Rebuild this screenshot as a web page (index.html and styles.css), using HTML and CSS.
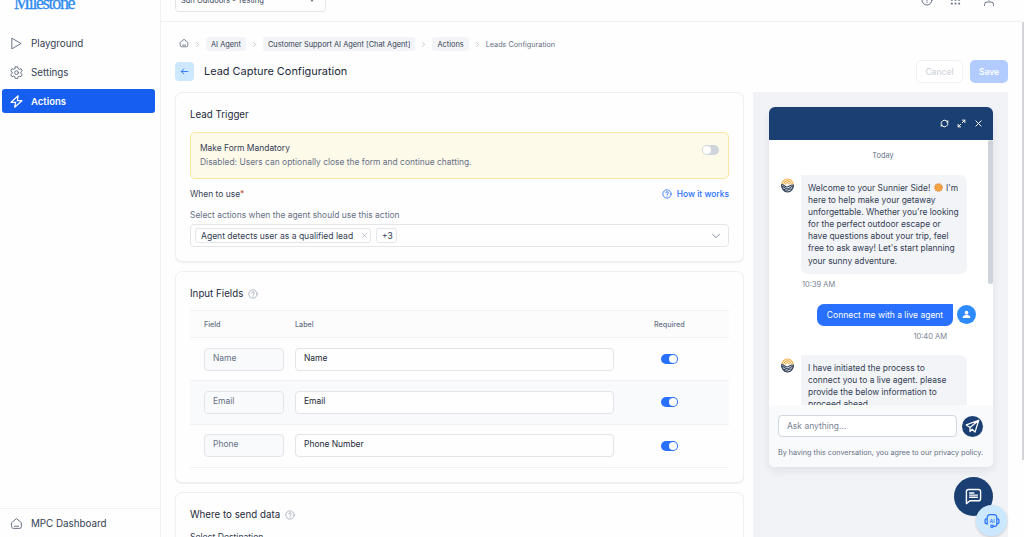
FILE: index.html
```html
<!DOCTYPE html>
<html lang="en">
<head>
    <meta charset="UTF-8">
    <meta name="viewport" content="width=device-width, initial-scale=1.0">
    <title>Lead Capture Configuration</title>
    <link rel="stylesheet" href="styles.css">
</head>
<body>

    <!-- shared icons -->
    <svg class="sprite" width="0" height="0">
        <symbol id="i-home" viewBox="0 0 24 24"><path d="M3 10.5 12 3l9 7.5V18a3 3 0 0 1-3 3H6a3 3 0 0 1-3-3z M8 17h8"/></symbol>
        <symbol id="i-help" viewBox="0 0 24 24"><circle cx="12" cy="12" r="10"/><path d="M9 9.2a3 3 0 0 1 6 .6c0 2-3 2.4-3 4.2 M12 17v.6"/></symbol>
        <symbol id="i-right" viewBox="0 0 24 24"><path d="m9 5 7 7-7 7"/></symbol>
        <symbol id="i-down" viewBox="0 0 24 24"><path d="m4 8 8 8 8-8"/></symbol>
        <symbol id="i-x" viewBox="0 0 24 24"><path d="m5 5 14 14M19 5 5 19"/></symbol>
        <symbol id="i-bot" viewBox="0 0 28 32">
            <g stroke="#f3a93c" stroke-width="2.4"><path d="M2 14a12 12 0 0 1 24 0 M6 14a8 8 0 0 1 16 0 M10 14a4 4 0 0 1 8 0"/></g>
            <g stroke="#35435a" stroke-width="2.4"><path d="M1 14c5-1 8 7 13 5s7-5 13-4 M1 18c5-1 8 6 13 5s7-5 13-5 M3 23c4 0 7 5 11 3s6-3 11-3 M6 27c5 3 11 4 16 0 M1 14c0 8 5 16 13 16s13-8 13-16"/></g>
        </symbol>
    </svg>

    <aside class="sidebar">
        <div class="logo"><span>Milestone</span></div>
        <nav class="menu">
            <a class="menu-item">
                <svg class="icon" viewBox="0 0 24 24"><path d="M4 2.5 20.500 12 4 21.500z"/></svg>
                Playground
            </a>
            <a class="menu-item">
                <svg class="icon" viewBox="0 0 24 24"><path d="M9.800 1.500h4.400l.7 3.300 2.300 1.300 3.200-1 2.200 3.700-2.500 2.300v2.600l2.500 2.300-2.200 3.700-3.200-1-2.300 1.300-.7 3.300H9.800l-.7-3.300-2.300-1.300-3.200 1-2.200-3.700 2.500-2.300v-2.600L1.400 8.800l2.200-3.700 3.200 1 2.300-1.300z"/><circle cx="12" cy="12.300" r="3.500"/></svg>
                Settings
            </a>
            <a class="menu-item active">
                <svg class="icon" viewBox="0 0 24 24"><path d="M15 1.500 2 13.500h8.500L8.500 22.500 22 10.500h-8.500z"/></svg>
                Actions
            </a>
        </nav>
        <a class="menu-item dashboard">
            <svg class="icon"><use href="#i-home"/></svg>
            MPC Dashboard
        </a>
    </aside>

    <main class="main">
        <header class="topbar">
            <div class="site-select"><span>Sun Outdoors - Testing</span><i class="caret"></i></div>
            <div class="topbar-icons">
                <svg class="icon" viewBox="0 0 24 24"><circle cx="12" cy="12" r="10"/><path d="M12 7v6M12 16v1"/></svg>
                <svg class="icon dots" viewBox="0 0 24 24"><path d="M2 4h4M10 4h4M18 4h4M2 12h4M10 12h4M18 12h4M2 20h4M10 20h4M18 20h4"/></svg>
                <svg class="icon" viewBox="0 0 24 24"><circle cx="12" cy="7" r="5"/><path d="M3 23v-2a5 5 0 0 1 5-5h8a5 5 0 0 1 5 5v2"/></svg>
            </div>
        </header>

        <div class="page">
            <div class="breadcrumb">
                <svg class="icon home"><use href="#i-home"/></svg>
                <svg class="icon sep"><use href="#i-right"/></svg>
                <span class="crumb">AI Agent</span>
                <svg class="icon sep"><use href="#i-right"/></svg>
                <span class="crumb">Customer Support AI Agent [Chat Agent]</span>
                <svg class="icon sep"><use href="#i-right"/></svg>
                <span class="crumb">Actions</span>
                <svg class="icon sep"><use href="#i-right"/></svg>
                <span class="crumb-last">Leads Configuration</span>
            </div>

            <div class="title-row">
                <button class="back"><svg class="icon" viewBox="0 0 24 24"><path d="M21 12H4M10 5.500 3.500 12l6.500 6.500"/></svg></button>
                <h1>Lead Capture Configuration</h1>
                <button class="btn cancel">Cancel</button>
                <button class="btn save">Save</button>
            </div>

            <div class="columns">
                <div class="forms">
                    <section class="card trigger">
                        <h2>Lead Trigger</h2>
                        <div class="notice">
                            <div>
                                <div class="notice-title">Make Form Mandatory</div>
                                <div class="notice-text">Disabled: Users can optionally close the form and continue chatting.</div>
                            </div>
                            <span class="toggle"></span>
                        </div>
                        <div class="when-row">
                            <span>When to use<b>*</b></span>
                            <a class="how"><svg class="icon"><use href="#i-help"/></svg>How it works</a>
                        </div>
                        <p class="hint">Select actions when the agent should use this action</p>
                        <div class="multi-select">
                            <span class="tag first-tag">Agent detects user as a qualified lead <svg class="icon"><use href="#i-x"/></svg></span>
                            <span class="tag more">+3</span>
                            <svg class="icon arrow"><use href="#i-down"/></svg>
                        </div>
                    </section>

                    <section class="card fields">
                        <h2>Input Fields <svg class="icon"><use href="#i-help"/></svg></h2>
                        <div class="row head">
                            <span>Field</span><span>Label</span><span class="req">Required</span>
                        </div>
                        <div class="row">
                            <div class="input disabled">Name</div><div class="input">Name</div><span class="toggle on"></span>
                        </div>
                        <div class="row alt">
                            <div class="input disabled">Email</div><div class="input">Email</div><span class="toggle on"></span>
                        </div>
                        <div class="row">
                            <div class="input disabled">Phone</div><div class="input">Phone Number</div><span class="toggle on"></span>
                        </div>
                    </section>

                    <section class="card destination">
                        <h2>Where to send data <svg class="icon"><use href="#i-help"/></svg></h2>
                        <p>Select Destination</p>
                    </section>
                </div>

                <div class="preview">
                    <div class="chat">
                        <div class="chat-header">
                            <svg class="icon" viewBox="0 0 24 24"><path d="M3 14A9.300 9.300 0 0 1 18 5.200M21 10A9.300 9.300 0 0 1 6 18.800"/><path class="solid" d="M15.500 8.500 22 9V2.500zM8.500 15.500 2 15v6.500z"/></svg>
                            <svg class="icon" viewBox="0 0 24 24"><path d="M14 10 21 3M14.500 3H21v6.500M10 14l-7 7M9.500 21H3v-6.500"/></svg>
                            <svg class="icon close"><use href="#i-x"/></svg>
                        </div>
                        <div class="messages">
                            <div class="thread">
                                <div class="day">Today</div>
                                <div class="msg">
                                    <svg class="bot"><use href="#i-bot"/></svg>
                                    <div class="bubble">Welcome to your Sunnier Side! <svg class="sun" viewBox="0 0 20 20"><circle cx="10" cy="10" r="8" fill="#f2a541" stroke="#e58a3a" stroke-width="3" stroke-dasharray="3 1.200"/></svg> I'm<br>here to help make your getaway<br>unforgettable. Whether you're looking<br>for the perfect outdoor escape or<br>have questions about your trip, feel<br>free to ask away! Let's start planning<br>your sunny adventure.</div>
                                </div>
                                <div class="time">10:39 AM</div>
                                <div class="msg user">
                                    <div class="bubble">Connect me with a live agent</div>
                                    <div class="avatar"><svg viewBox="0 0 24 24"><circle cx="12" cy="7" r="5"/><path d="M2 21v-2c0-4 6-5.500 10-5.500S22 15 22 19v2z"/></svg></div>
                                </div>
                                <div class="time right">10:40 AM</div>
                                <div class="msg second">
                                    <svg class="bot"><use href="#i-bot"/></svg>
                                    <div class="bubble">I have initiated the process to<br>connect you to a live agent. please<br>provide the below information to<br>proceed ahead</div>
                                </div>
                            </div>
                            <div class="chat-scroll"></div>
                        </div>
                        <div class="chat-footer">
                            <div class="ask-row">
                                <div class="ask">Ask anything...</div>
                                <button class="send"><svg class="icon" viewBox="0 0 24 24"><path d="M22 2 2 9.500l6 4v6.500l3.500-3.500L16 21z M22 2 8 13.500"/></svg></button>
                            </div>
                            <p class="policy">By having this conversation, you agree to our privacy policy.</p>
                        </div>
                    </div>
                </div>
            </div>
        </div>
    </main>
    <div class="page-scroll"><div class="page-thumb"></div></div>

    <div class="fab chat-fab"><svg class="icon" viewBox="0 0 24 24"><path d="M2 22V5a3 3 0 0 1 3-3h14a3 3 0 0 1 3 3v10a3 3 0 0 1-3 3H7z M6.500 7h6M6.500 10h11M6.500 13h11"/></svg></div>
    <div class="fab ai-fab">
        <svg class="icon" viewBox="0 0 30 30"><path d="M6 10V9a6 6 0 0 1 6-6h6a6 6 0 0 1 6 6v12a4 4 0 0 1-4 4h-3M6 10v11M6 11H4a2 2 0 0 0-2 2v5a2 2 0 0 0 2 2h2M24 11h2a2 2 0 0 1 2 2v5a2 2 0 0 1-2 2h-2"/><circle cx="15" cy="25" r="2.300"/><text x="15" y="19" text-anchor="middle">AI</text></svg>
    </div>

</body>
</html>
```

FILE: styles.css
```css
* {
    box-sizing: border-box;
}

body {
    margin: 0;
    display: flex;
    height: 537px;
    overflow: hidden;
    background: #fefefe;
    font-family: Inter, "Liberation Sans", sans-serif;
    font-size: 8.45px;
    color: #344054;
}

h1, h2, p {
    margin: 0;
    font-weight: 400;
}

button {
    font-family: inherit;
    padding: 0;
    border: none;
}

.sprite {
    position: absolute;
}

.icon {
    flex: none;
    width: 10px;
    height: 10px;
    fill: none;
    stroke: currentColor;
    stroke-width: 2;
    stroke-linecap: round;
    stroke-linejoin: round;
}

/* sidebar */
.sidebar {
    width: 161px;
    flex: none;
    display: flex;
    flex-direction: column;
    border-right: 1px solid #f0f1f4;
}

.logo {
    height: 31px;
    padding-left: 14px;
    display: flex;
    align-items: flex-start;
    color: #2f8bf0;
    font-family: "Liberation Serif", serif;
    font-size: 18px;
    letter-spacing: -1.3px;
    line-height: 20px;
}

.logo span {
    margin-top: -7px;
    -webkit-text-stroke: 0.3px #2f8bf0;
}

.menu {
    flex: 1;
    padding: 0 5px 0 2px;
}

.menu-item {
    display: flex;
    align-items: center;
    gap: 8px;
    height: 24px;
    margin-bottom: 5px;
    padding-left: 8px;
    font-size: 9.8px;
    font-weight: 400;
    border-radius: 3px;
}

.menu-item .icon {
    width: 13px;
    height: 13px;
    stroke-width: 1.8;
    color: #667085;
}

.menu-item.active {
    background: #155eef;
    color: #fff;
    font-size: 9.5px;
    font-weight: 600;
}

.menu-item.active .icon {
    color: #fff;
    stroke-width: 2.2;
}

.dashboard {
    height: 29px;
    margin: 0;
    padding-left: 10px;
    border-top: 1px solid #f0f1f4;
    border-radius: 0;
}

/* top bar */
.main {
    flex: 1;
    min-width: 0;
}

.topbar {
    height: 22px;
    display: flex;
    justify-content: space-between;
    align-items: flex-end;
    overflow: hidden;
    border-bottom: 1px solid #f0f1f4;
    padding: 0 27px 9px 14px;
}

.site-select {
    display: flex;
    justify-content: space-between;
    align-items: center;
    width: 151px;
    height: 23px;
    padding: 0 11px 0 5px;
    border: 1px solid #e4e6ea;
    border-radius: 4px;
    font-size: 7.55px;
}

.caret {
    border: 2.5px solid transparent;
    border-top: 3px solid #667085;
    border-bottom: none;
}

.topbar-icons {
    display: flex;
    align-items: center;
    height: 12px;
    margin-bottom: 6px;
    color: #667085;
}

.topbar-icons .icon {
    width: 12px;
    height: 12px;
}

.topbar-icons .dots {
    margin: 0 22px 0 17px;
    width: 11px;
    stroke-width: 3.5;
    stroke-linecap: butt;
}

/* page */
.page {
    padding: 15px 14px 0 14px;
}

.breadcrumb {
    display: flex;
    align-items: center;
    height: 14px;
    font-size: 7.25px;
    color: #344054;
}

.breadcrumb .home {
    color: #667085;
    margin: -2px 0 0 4px;
}

.breadcrumb .sep {
    width: 7px;
    height: 7px;
    margin: 0 5px;
    color: #98a2b3;
}

.crumb {
    height: 14px;
    line-height: 15px;
    padding: 0 5px;
    border-radius: 3px;
    background: #f2f4f7;
    font-size: 7.4px;
}

.crumb-last {
    color: #667085;
}

.title-row {
    display: flex;
    align-items: center;
    height: 23px;
    margin-top: 9px;
}

.back {
    width: 19px;
    height: 19px;
    border-radius: 4px;
    background: #cce8ff;
    color: #2970ff;
    display: flex;
    align-items: center;
    justify-content: center;
}

.back .icon {
    width: 9px;
    height: 9px;
    stroke-width: 2.4;
}

h1 {
    flex: 1;
    margin: -2px 0 0 10px;
    font-size: 10.95px;
    color: #1d2939;
}

.btn {
    height: 23px;
    border-radius: 5px;
    font-size: 8.5px;
    font-weight: 500;
}

.cancel {
    width: 47px;
    border: 1px solid #f0f1f4;
    background: #fff;
    color: #d0d5dd;
}

.save {
    width: 38px;
    margin-left: 7px;
    background: #b2ccff;
    color: #fff;
    font-weight: 600;
}

.columns {
    display: flex;
    justify-content: space-between;
    margin-top: 9px;
}

.forms {
    width: 569px;
    display: flex;
    flex-direction: column;
    gap: 9px;
}

.card {
    padding: 0 14px;
    border: 1px solid #eff0f3;
    border-radius: 7px;
    background: #fefefe;
    box-shadow: 0 1px 1px rgba(16, 24, 40, 0.07);
}

.card h2 {
    display: flex;
    align-items: center;
    gap: 5px;
    font-size: 9.75px;
    line-height: 14px;
    color: #1d2939;
}

.card h2 .icon {
    color: #98a2b3;
    stroke-width: 1.8;
}

.trigger {
    height: 170px;
    padding-top: 15px;
}

.notice {
    display: flex;
    justify-content: space-between;
    height: 47px;
    margin-top: 10px;
    padding: 8px 9px;
    border: 1px solid #fbe7a1;
    border-radius: 5px;
    background: #fefaea;
    line-height: 14px;
}

.notice-text {
    color: #667085;
}

.toggle {
    width: 17px;
    height: 10px;
    border-radius: 5px;
    background: #d0d5dd;
    padding: 1px;
}

.toggle::before {
    content: "";
    display: block;
    width: 8px;
    height: 8px;
    border-radius: 50%;
    background: #fff;
}

.toggle.on {
    background: #2970ff;
}

.toggle.on::before {
    margin-left: 7px;
}

.notice .toggle {
    margin-top: 4px;
}

.when-row {
    display: flex;
    justify-content: space-between;
    align-items: center;
    height: 14px;
    margin-top: 8px;
}

.when-row b {
    color: #c4552d;
    font-weight: 400;
}

.how {
    display: flex;
    align-items: center;
    gap: 5px;
    color: #2970ff;
    font-weight: 500;
}

.hint {
    margin-top: 7px;
    line-height: 14px;
    color: #667085;
}

.multi-select {
    display: flex;
    align-items: center;
    gap: 5px;
    height: 23px;
    margin-top: 2px;
    padding: 0 7px 0 4px;
    border: 1px solid #e4e6ea;
    border-radius: 4px;
}

.tag {
    display: flex;
    align-items: center;
    justify-content: space-between;
    height: 15px;
    padding: 0 3px 0 5px;
    border: 1px solid #e4e6ea;
    border-radius: 3px;
}

.first-tag {
    width: 176px;
    padding-right: 2px;
    font-size: 8.55px;
}

.tag .icon {
    width: 7px;
    height: 7px;
    color: #98a2b3;
}

.arrow {
    margin-left: auto;
    color: #667085;
}

/* input fields table */
.fields {
    height: 212px;
    padding-top: 15px;
}

.row {
    display: grid;
    grid-template-columns: 80px 319px 1fr;
    column-gap: 11px;
    align-items: center;
    height: 43.3px;
    padding-left: 14px;
    border-bottom: 1px solid #f0f1f4;
}

.row.head {
    height: 28px;
    margin-top: 9px;
    border-top: 1px solid #f0f1f4;
    background: #fcfcfd;
    font-size: 7.2px;
    font-weight: 500;
    color: #667085;
}

.row.alt {
    background: #f9fafb;
}

.row .req {
    margin-left: 29px;
}

.row .toggle {
    margin-left: 36px;
}

.input {
    height: 23px;
    line-height: 19px;
    padding: 0 8px;
    border: 1px solid #e2e4e9;
    border-radius: 4px;
    background: #fefefe;
    color: #1d2939;
}

.input.disabled {
    background: #f9fafb;
    color: #667085;
}

.destination {
    height: 90px;
    padding-top: 15px;
}

.destination p {
    margin-top: 9px;
    line-height: 13px;
    font-size: 8.6px;
}

/* chat preview */
.preview {
    width: 255px;
    height: 460px;
    padding: 15px 15px 15px 16px;
    background: #f2f3f7;
}

.chat {
    width: 224px;
    height: 360px;
    border-radius: 6px;
    overflow: hidden;
    background: #fff;
    box-shadow: 0 4px 10px rgba(16, 24, 40, 0.08);
}

.chat-header {
    display: flex;
    align-items: center;
    justify-content: flex-end;
    gap: 8px;
    height: 33px;
    padding-right: 10px;
    background: #193f73;
    color: #fff;
}

.chat-header .icon {
    width: 9px;
    height: 9px;
    stroke-width: 2.6;
}

.chat-header .solid {
    fill: #fff;
    stroke: none;
}

.messages {
    display: flex;
    height: 265px;
    overflow: hidden;
}

.thread {
    flex: 1;
    padding: 9px 12px 0;
}

.chat-scroll {
    width: 5px;
    height: 144px;
    border-radius: 3px;
    background: #ced2da;
}

.day {
    text-align: center;
    margin-left: 9px;
    line-height: 13px;
    font-size: 7.4px;
    color: #667085;
}

.msg {
    display: flex;
    margin-top: 13px;
}

.bot {
    width: 13px;
    height: 17px;
    margin: 2px 7px 0 0;
    fill: none;
}

.bubble {
    width: 166px;
    padding: 7px;
    border-radius: 0 7px 7px 7px;
    background: #f2f4f7;
    line-height: 12.1px;
    font-size: 8.43px;
    white-space: nowrap;
}

.sun {
    width: 9px;
    height: 9px;
    margin: 0 1px;
    vertical-align: -1px;
}

.time {
    margin: 5px 0 0 21px;
    line-height: 12px;
    font-size: 7.5px;
    color: #7b8494;
}

.time.right {
    margin: 5px 29px 0 0;
    text-align: right;
}

.msg.second {
    margin-top: 12px;
}

.user {
    justify-content: flex-end;
    align-items: center;
    gap: 4px;
    height: 22px;
}

.user .bubble {
    width: 136px;
    height: 22px;
    padding: 5px 0;
    text-align: center;
    border-radius: 7px 0 7px 7px;
    background: #2970ff;
    color: #fff;
    font-size: 8.5px;
}

.avatar {
    display: flex;
    align-items: center;
    justify-content: center;
    width: 19px;
    height: 19px;
    border-radius: 50%;
    background: #2e8bff;
}

.avatar svg {
    width: 9px;
    height: 9px;
    fill: #fff;
}

.chat-footer {
    height: 62px;
    padding: 10px 9px 0;
    background: #f9fafc;
}

.ask-row {
    display: flex;
    align-items: center;
    gap: 5px;
}

.ask {
    width: 179px;
    height: 22px;
    line-height: 20px;
    padding-left: 8px;
    border: 1px solid #d3d7df;
    border-radius: 4px;
    background: #fff;
    color: #7b8494;
    font-size: 8.5px;
}

.send {
    display: flex;
    align-items: center;
    justify-content: center;
    width: 21px;
    height: 21px;
    border-radius: 50%;
    background: #193f73;
    color: #fff;
}

.send .icon {
    width: 15px;
    height: 15px;
}

.policy {
    margin-top: 9px;
    line-height: 13px;
    font-size: 7.23px;
    color: #667085;
    white-space: nowrap;
}

.page-scroll {
    width: 2px;
    flex: none;
    padding-top: 22px;
}

.page-thumb {
    height: 438px;
    background: #d3d5da;
}

/* floating buttons */
.fab {
    position: absolute;
    display: flex;
    align-items: center;
    justify-content: center;
    border-radius: 50%;
}

.chat-fab {
    left: 954px;
    top: 477px;
    width: 39px;
    height: 39px;
    background: #193f73;
    color: #fff;
}

.chat-fab .icon {
    width: 17px;
    height: 17px;
}

.ai-fab {
    left: 976px;
    top: 505px;
    width: 31px;
    height: 31px;
    background: #cce8ff;
    color: #2970ff;
    box-shadow: 0 1px 3px rgba(16, 24, 40, 0.2);
}

.ai-fab .icon {
    width: 16px;
    height: 16px;
    stroke-width: 2.2;
}

.ai-fab text {
    font-size: 10px;
    font-weight: 500;
    fill: currentColor;
    stroke: none;
}
```
